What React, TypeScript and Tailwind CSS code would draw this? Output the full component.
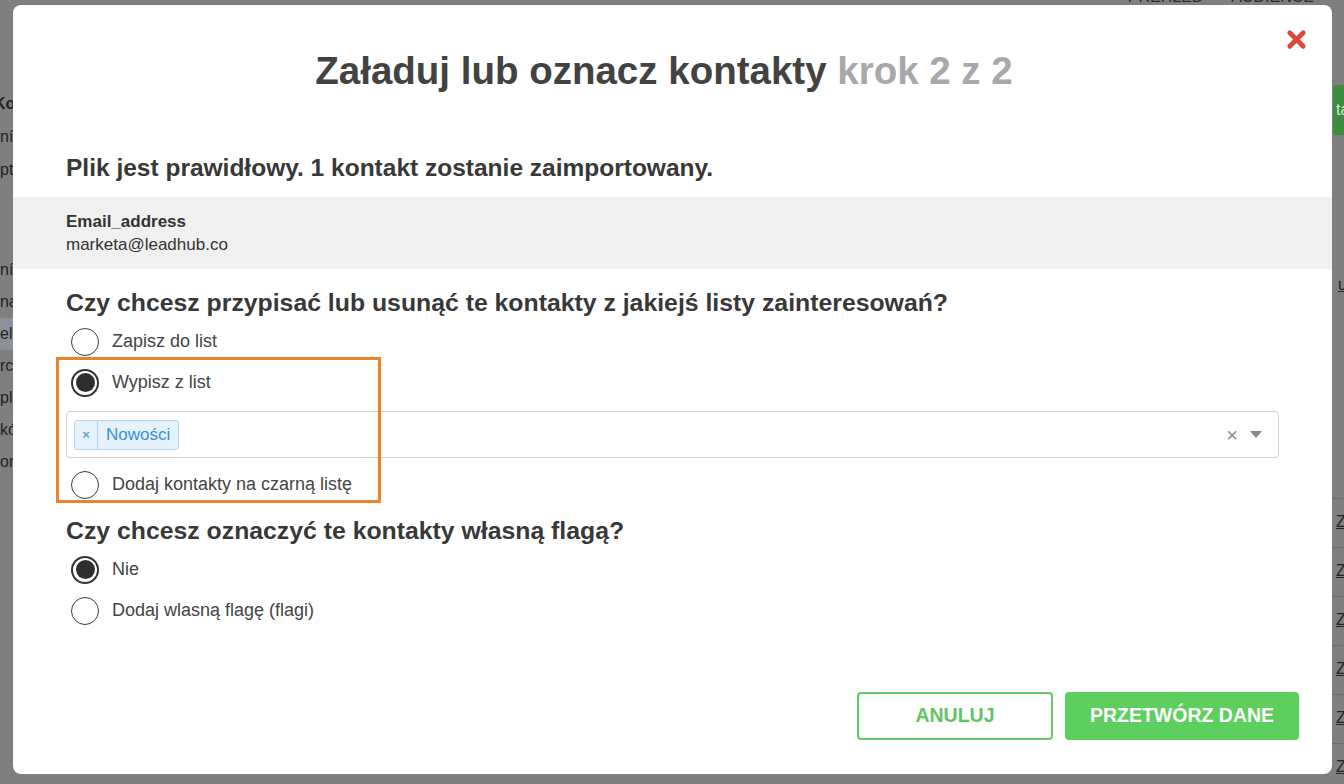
import { X } from "lucide-react";

const sidebarTop = [
  { t: "Kontakty", bold: true },
  { t: "ní přehled" },
  { t: "ptáci" },
];
const sidebarBottom = [
  { t: "ní seznam" },
  { t: "nastavení" },
  { t: "eleady", active: true },
  { t: "rchiv" },
  { t: "plány" },
  { t: "kódy" },
  { t: "ormuláře" },
];

function Radio({ checked, label }: { checked?: boolean; label: string }) {
  return (
    <label className="flex h-[41px] items-center gap-[13px] pl-[5px] text-[18px] text-[#444]">
      <span
        className={`flex h-[28px] w-[28px] shrink-0 items-center justify-center rounded-full ${
          checked ? "border-2 border-[#333]" : "border-[1.5px] border-[#3a3a3a]"
        }`}
      >
        {checked ? <span className="h-[19px] w-[19px] rounded-full bg-[#2e2e2e]" /> : null}
      </span>
      {label}
    </label>
  );
}

function BackgroundPage() {
  return (
    <div className="flex h-full flex-col">
      <div className="-mt-[11px] flex h-[16px] shrink-0 justify-end gap-[28px] pr-[30px] text-[16px] uppercase leading-[16px] text-[#2a2a2a]">
        <span>Přehled</span>
        <span>Audience</span>
      </div>
      <div className="flex flex-1">
        <div className="w-[120px] shrink-0 overflow-hidden pt-[82px] text-[16px] text-[#222]">
          {sidebarTop.map((s) => (
            <div className={`h-[33px] whitespace-nowrap leading-[33px] ${s.bold ? "-ml-[6px] font-bold" : ""}`} key={s.t}>
              {s.t}
            </div>
          ))}
          <div className="h-[68px]" />
          {sidebarBottom.map((s) => (
            <div
              className={`h-[32px] whitespace-nowrap leading-[32px] ${s.active ? "bg-[#8b919a]" : ""}`}
              key={s.t}
            >
              {s.t}
            </div>
          ))}
        </div>
        <div className="flex-1" />
        <div className="w-[12px] shrink-0 overflow-hidden pt-[80px] text-[16px] text-[#222]">
          <div className="ml-[1px] h-[50px] whitespace-nowrap rounded-l bg-[#3e8d3e] pl-[3px] leading-[50px] text-[#cfe8cf]">
            tart
          </div>
          <div className="h-[138px]" />
          <div className="whitespace-nowrap pl-[6px] underline">upravit</div>
          <div className="h-[201px]" />
          {[0, 1, 2, 3, 4, 5].map((i) => (
            <div className="h-[49px] whitespace-nowrap border-t border-[#6e6e6e] pl-[4px] leading-[45px] underline" key={i}>
              Zobrazit
            </div>
          ))}
        </div>
      </div>
    </div>
  );
}

export default function App() {
  return (
    <div className="relative h-[784px] w-[1344px] overflow-hidden bg-[#7f7f7f] font-['Liberation_Sans',Arial,sans-serif]">
      <BackgroundPage />
      <div className="absolute inset-0 flex pb-[10px] pl-[13px] pr-[12px] pt-[5px]">
        <div className="relative flex flex-1 flex-col rounded-[8px] bg-white px-[53px] pb-[34px] pt-[44px]">
          <button
            className="absolute right-[22px] top-[21px] text-[#e0473c]"
            type="button"
          >
            <X size={27} strokeWidth={4.2} />
          </button>

          <h1 className="pr-[17px] text-center text-[38.5px] font-bold leading-[44px] text-[#424242]">
            Załaduj lub oznacz kontakty <span className="text-[#a8a8a8]">krok 2 z 2</span>
          </h1>

          <h2 className="mt-[57px] text-[24.5px] font-bold leading-[36px] text-[#383838]">
            Plik jest prawidłowy. 1 kontakt zostanie zaimportowany.
          </h2>

          <div className="-mx-[53px] mt-[11px] bg-[#f0f0f0] px-[53px] py-[13px] text-[17px] leading-[23px] text-[#333]">
            <div className="font-bold">Email_address</div>
            <div>marketa@leadhub.co</div>
          </div>

          <h3 className="mt-[16px] text-[24.8px] font-bold leading-[36px] text-[#383838]">
            Czy chcesz przypisać lub usunąć te kontakty z jakiejś listy zainteresowań?
          </h3>

          <div className="relative">
            <Radio label="Zapisz do list" />
            <Radio checked label="Wypisz z list" />
            <div className="mt-[8px] flex h-[47px] items-center rounded-[4px] border border-[#cfcfcf] pl-[7px] pr-[16px]">
              <div className="flex h-[30px] items-stretch rounded-[3px] border border-[#b3d5ef] bg-[#e4f2fc] text-[#3a8fd0]">
                <span className="flex w-[23px] items-center justify-center border-r border-[#b3d5ef] text-[13px] font-bold text-[#5aa2d8]">
                  ×
                </span>
                <span className="flex items-center px-[8px] text-[17px]">Nowości</span>
              </div>
              <div className="flex-1" />
              <span className="text-[20px] leading-none text-[#8a8a8a]">×</span>
              <svg className="ml-[12px]" height="7" viewBox="0 0 12 7" width="12">
                <path d="M0 0h12L6 7z" fill="#888" />
              </svg>
            </div>
            <div className="mt-[6px]">
              <Radio label="Dodaj kontakty na czarną listę" />
            </div>
            <div className="pointer-events-none absolute left-[-10px] top-[36px] h-[146px] w-[325px] border-[3px] border-[#e8842c]" />
          </div>

          <h3 className="mt-[8px] text-[24.8px] font-bold leading-[36px] text-[#383838]">
            Czy chcesz oznaczyć te kontakty własną flagą?
          </h3>
          <div>
            <Radio checked label="Nie" />
            <Radio label="Dodaj wlasną flagę (flagi)" />
          </div>

          <div className="-mr-[20px] mt-auto flex justify-end gap-[12px]">
            <button
              className="h-[48px] w-[196px] rounded-[4px] border-2 border-[#66c866] bg-white text-[19.5px] font-bold text-[#62c562]"
              type="button"
            >
              ANULUJ
            </button>
            <button
              className="h-[48px] w-[234px] rounded-[4px] bg-[#5dcf5f] text-[19.5px] font-bold text-white"
              type="button"
            >
              PRZETWÓRZ DANE
            </button>
          </div>
        </div>
      </div>
    </div>
  );
}
